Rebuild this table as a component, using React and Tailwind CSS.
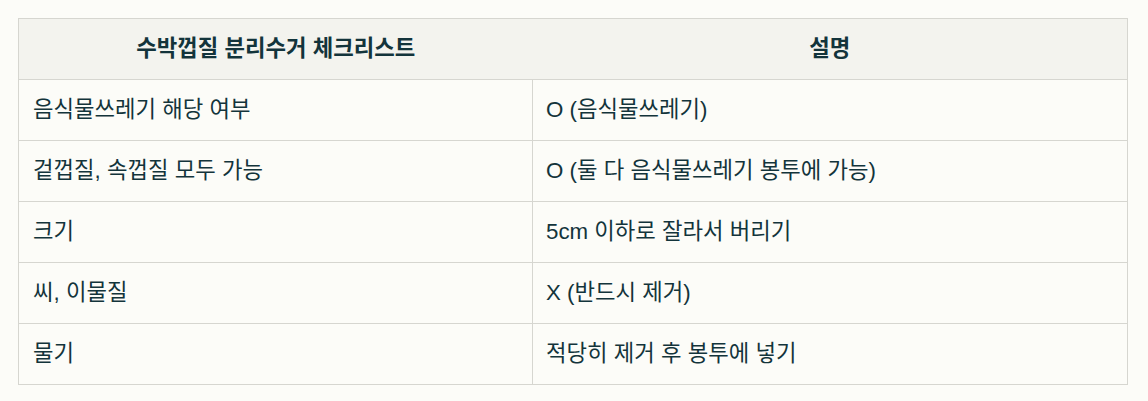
const rows = [
  ['음식물쓰레기 해당 여부', 'O (음식물쓰레기)'],
  ['겉껍질, 속껍질 모두 가능', 'O (둘 다 음식물쓰레기 봉투에 가능)'],
  ['크기', '5cm 이하로 잘라서 버리기'],
  ['씨, 이물질', 'X (반드시 제거)'],
  ['물기', '적당히 제거 후 봉투에 넣기'],
]

export default function App() {
  return (
    <div
      className="min-h-[401px] w-[1148px] bg-[#fcfcf8] p-[18px] text-[#13343b]"
      style={{ fontFamily: '"Liberation Sans", "Noto Sans CJK KR", sans-serif' }}
    >
      <table className="w-[1110px] border-collapse border border-[#d6d6d0] text-[22.3px]">
        <colgroup>
          <col className="w-[514px]" />
          <col />
        </colgroup>
        <thead>
          <tr className="bg-[#f3f3ee]">
            <th className="h-[61px] border-b border-[#d6d6d0] px-[14px] text-center font-bold">
              수박껍질 분리수거 체크리스트
            </th>
            <th className="h-[61px] border-b border-[#d6d6d0] px-[14px] text-center font-bold">
              설명
            </th>
          </tr>
        </thead>
        <tbody>
          {rows.map(([a, b]) => (
            <tr key={a}>
              <td className="h-[61px] border-t border-[#d6d6d0] px-[14px] text-left">{a}</td>
              <td className="h-[61px] border-t border-l border-[#d6d6d0] px-[13px] text-left">{b}</td>
            </tr>
          ))}
        </tbody>
      </table>
    </div>
  )
}
